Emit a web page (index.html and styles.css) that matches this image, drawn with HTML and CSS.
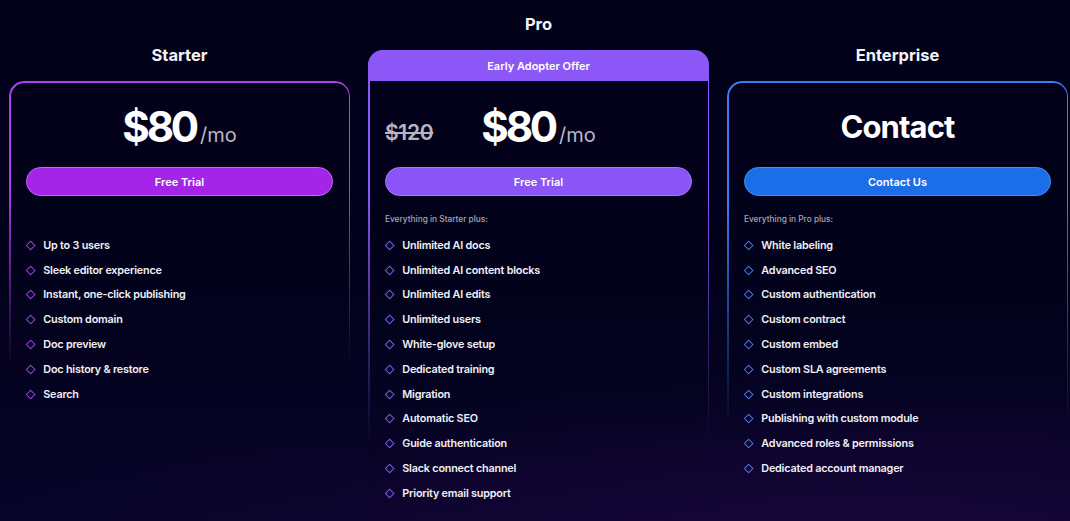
FILE: index.html
```html
<!DOCTYPE html>
<html lang="en">
<head>
<meta charset="utf-8">
<title>Pricing</title>
<link rel="stylesheet" href="styles.css">
</head>
<body>
<main class="pricing">
  <section class="plan plan-starter">
    <h2 class="plan-title">Starter</h2>
    <div class="card">
      <div class="price-row">
        <span class="old-price"></span>
        <div class="price"><span class="amount">$80</span><span class="per">/mo</span></div>
        <span></span>
      </div>
      <button class="btn">Free Trial</button>
      <p class="includes"></p>
      <ul class="features">
        <li>Up to 3 users</li>
        <li>Sleek editor experience</li>
        <li>Instant, one-click publishing</li>
        <li>Custom domain</li>
        <li>Doc preview</li>
        <li>Doc history &amp; restore</li>
        <li>Search</li>
      </ul>
    </div>
  </section>

  <section class="plan plan-pro">
    <h2 class="plan-title">Pro</h2>
    <div class="card">
      <div class="card-badge">Early Adopter Offer</div>
      <div class="price-row">
        <span class="old-price">$120</span>
        <div class="price"><span class="amount">$80</span><span class="per">/mo</span></div>
        <span></span>
      </div>
      <button class="btn">Free Trial</button>
      <p class="includes">Everything in Starter plus:</p>
      <ul class="features">
        <li>Unlimited AI docs</li>
        <li>Unlimited AI content blocks</li>
        <li>Unlimited AI edits</li>
        <li>Unlimited users</li>
        <li>White-glove setup</li>
        <li>Dedicated training</li>
        <li>Migration</li>
        <li>Automatic SEO</li>
        <li>Guide authentication</li>
        <li>Slack connect channel</li>
        <li>Priority email support</li>
      </ul>
    </div>
  </section>

  <section class="plan plan-enterprise">
    <h2 class="plan-title">Enterprise</h2>
    <div class="card">
      <div class="price-row">
        <span class="old-price"></span>
        <div class="price"><span class="contact">Contact</span></div>
        <span></span>
      </div>
      <button class="btn">Contact Us</button>
      <p class="includes">Everything in Pro plus:</p>
      <ul class="features">
        <li>White labeling</li>
        <li>Advanced SEO</li>
        <li>Custom authentication</li>
        <li>Custom contract</li>
        <li>Custom embed</li>
        <li>Custom SLA agreements</li>
        <li>Custom integrations</li>
        <li>Publishing with custom module</li>
        <li>Advanced roles &amp; permissions</li>
        <li>Dedicated account manager</li>
      </ul>
    </div>
  </section>
</main>
</body>
</html>
```

FILE: styles.css
```css
* { box-sizing: border-box; }

html, body {
  margin: 0;
  height: 100%;
}

body {
  font-family: Inter, "Noto Sans", sans-serif;
  color: #f2f2f7;
  background:
    radial-gradient(ellipse 60% 35% at 88% 104%, rgba(34, 6, 70, 0.55), rgba(34, 6, 70, 0) 100%),
    radial-gradient(ellipse 55% 30% at 45% 108%, rgba(26, 6, 60, 0.45), rgba(26, 6, 60, 0) 100%),
    linear-gradient(180deg, #02011a 0%, #03021d 55%, #070428 100%);
  overflow: hidden;
}

.pricing {
  display: flex;
  align-items: flex-start;
  gap: 18px;
  padding: 14px 0 0 9px;
}

.plan {
  width: 341px;
  flex: none;
  --accent: #b23ff0;
  --btn: #a424e8;
  --btn-border: #c466ff;
  --bullet: #9340d4;
}

.plan-starter,
.plan-enterprise {
  padding-top: 31px;
}

.plan-pro {
  --accent: #8b58f7;
  --btn: #8a54f7;
  --btn-border: #a07aff;
  --bullet: #7b5ae6;
}

.plan-enterprise {
  --accent: #3a7cf2;
  --btn: #1c6de8;
  --btn-border: #4a8cf8;
  --bullet: #4a70dc;
}

.plan-title {
  margin: 0 0 16px;
  text-align: center;
  font-size: 16.5px;
  line-height: 20px;
  font-weight: 700;
  color: #f4f4f8;
}

.card {
  position: relative;
  border-radius: 15px;
  padding: 0 17px 12px;
  background: linear-gradient(180deg, rgba(2, 1, 24, 0.6), rgba(2, 1, 24, 0) 90%);
}

.card::before {
  content: "";
  position: absolute;
  inset: 0;
  border-radius: 15px;
  padding: 1.5px;
  background: linear-gradient(180deg, var(--accent) 0%, var(--accent) 30%, rgba(0, 0, 0, 0.15) 85%, rgba(0, 0, 0, 0) 97%);
  -webkit-mask: linear-gradient(#000 0 0) content-box, linear-gradient(#000 0 0);
  -webkit-mask-composite: xor;
  mask-composite: exclude;
  pointer-events: none;
}

.card-badge {
  margin: 0 -17px;
  height: 31px;
  display: flex;
  align-items: center;
  justify-content: center;
  background: var(--accent);
  border-radius: 15px 15px 0 0;
  font-size: 11px;
  font-weight: 600;
  color: #ffffff;
}

.price-row {
  display: grid;
  grid-template-columns: 1fr auto 1fr;
  align-items: center;
  padding-top: 21px;
  height: 71px;
}

.old-price {
  justify-self: start;
  font-size: 21px;
  font-weight: 600;
  color: #b4b4c4;
  text-decoration: line-through;
  text-decoration-thickness: 1.5px;
  letter-spacing: -0.3px;
  padding-top: 2px;
}

.price {
  display: flex;
  align-items: baseline;
  line-height: 50px;
}

.amount {
  font-size: 42px;
  font-weight: 700;
  letter-spacing: -3.2px;
  color: #ffffff;
}

.per {
  font-size: 20px;
  font-weight: 400;
  color: #b9b9c9;
  margin-left: 4px;
}

.contact {
  font-size: 31px;
  font-weight: 700;
  letter-spacing: -0.9px;
  color: #ffffff;
}

.btn {
  display: block;
  width: 100%;
  height: 29px;
  margin: 15px 0 17px;
  border-radius: 15px;
  border: 1px solid var(--btn-border);
  background: var(--btn);
  color: #ffffff;
  font-family: inherit;
  font-size: 11px;
  font-weight: 600;
  cursor: pointer;
}

.includes {
  margin: 0;
  height: 12px;
  line-height: 12px;
  font-size: 8.3px;
  font-weight: 500;
  color: #a6a6b6;
}

.features {
  list-style: none;
  margin: 8px 0 0;
  padding: 0;
}

.features li {
  display: flex;
  align-items: center;
  gap: 9px;
  height: 24.8px;
  font-size: 10.8px;
  font-weight: 600;
  letter-spacing: -0.2px;
  color: #f0f0f6;
}

.features li::before {
  content: "";
  flex: none;
  width: 5.3px;
  height: 5.3px;
  margin-left: 1px;
  border: 1.2px solid var(--bullet);
  transform: rotate(45deg);
}
```
